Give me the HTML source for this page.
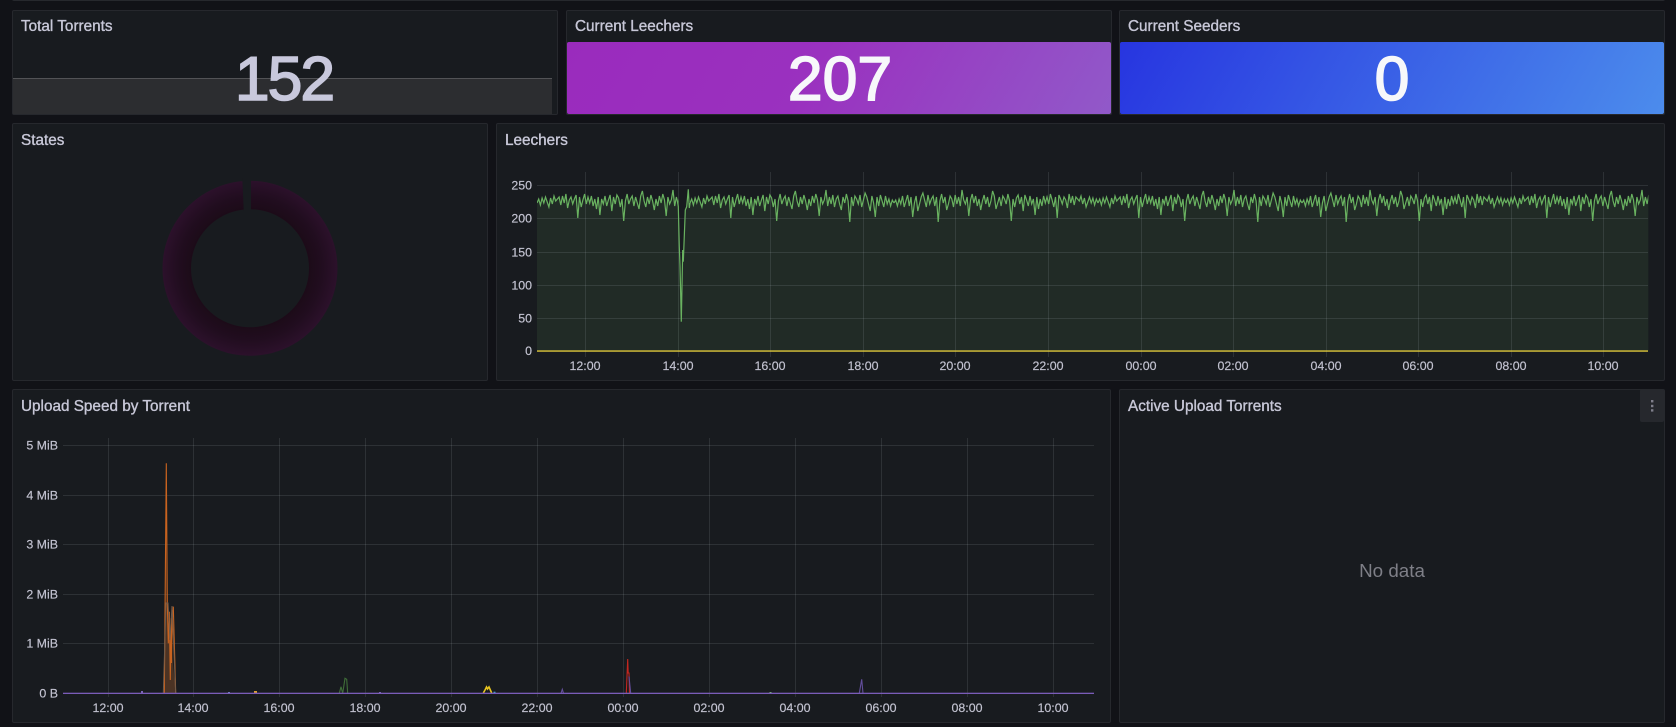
<!DOCTYPE html>
<html lang="en">
<head>
<meta charset="utf-8">
<title>Dashboard</title>
<style>
html,body{margin:0;padding:0;background:#111217;width:1676px;height:727px;overflow:hidden}
.p{position:absolute;background:#181b1f;border:1px solid #26282d;border-radius:2px;box-sizing:border-box}
svg{position:absolute;left:0;top:0}
text{font-family:"Liberation Sans",sans-serif}
.t{font-size:15.3px;fill:#c8c8d8;stroke:#c8c8d8;stroke-width:.35px}
.a{font-size:12.4px;fill:#c4c4d2;stroke:#c4c4d2;stroke-width:.15px}
.big{font-size:62.5px;stroke-width:1.6px;text-anchor:middle}
</style>
</head>
<body>
<div class="p" style="left:12px;top:-20px;width:1653px;height:21px"></div>
<div class="p" style="left:12px;top:10px;width:546px;height:105px"></div>
<div style="position:absolute;left:13px;top:78px;width:539px;height:36px;background:#2c2d30;border-top:1px solid #525356;box-sizing:border-box"></div>
<div class="p" style="left:566px;top:10px;width:546px;height:105px"></div>
<div style="position:absolute;left:567px;top:42px;width:544px;height:72px;border-radius:2px;background:linear-gradient(120deg,#9a2bbd,#9a31bf 45%,#9159c9)"></div>
<div class="p" style="left:1119px;top:10px;width:546px;height:105px"></div>
<div style="position:absolute;left:1120px;top:42px;width:544px;height:72px;border-radius:2px;background:linear-gradient(120deg,#2735e0,#4c8cec)"></div>
<div class="p" style="left:12px;top:123px;width:476px;height:258px"></div>
<div class="p" style="left:496px;top:123px;width:1169px;height:258px"></div>
<div class="p" style="left:12px;top:389px;width:1099px;height:334px"></div>
<div class="p" style="left:1119px;top:389px;width:546px;height:334px"></div>
<div style="position:absolute;left:1640px;top:389px;width:24px;height:33px;background:#26282d;border-radius:2px"></div>

<svg width="1676" height="727" viewBox="0 0 1676 727">
<defs>
<radialGradient id="dn" gradientUnits="userSpaceOnUse" cx="250" cy="268.3" r="87.5">
<stop offset="0.67" stop-color="#1c0b18"/>
<stop offset="0.82" stop-color="#210d1f"/>
<stop offset="1" stop-color="#2c112b"/>
</radialGradient>
<clipPath id="c1"><rect x="537" y="170" width="141.5" height="190"/></clipPath>
<clipPath id="c2"><rect x="690" y="170" width="958.3" height="190"/></clipPath>
<path id="n" fill="none" stroke="#69b260" stroke-width="1.2" vector-effect="non-scaling-stroke" d="M0 203 1 199 2 205 3 198 4 203 5 197 6 202 7 207 8 198 9 204 10 196 11 201 12 199 13 197 14 205 15 196 16 203 17 194 18 208 19 200 20 197 21 204 22 199 23 195 24 218 25 197 26 207 27 200 28 194 29 204 30 197 31 203 32 196 33 206 34 199 35 209 36 197 37 215 38 199 39 204 40 196 41 206 42 200 43 195 44 211 45 197 46 204 47 195 48 198 49 207 50 199 51 221 52 201 53 194 54 204 55 199 56 196 57 206 58 197 59 203 60 209 61 196 62 191 63 201 64 207 65 197 66 204 67 195 68 201 69 210 70 199 71 206 72 196 73 203 74 194 75 200 76 216 77 197 78 204 79 200 80 190 81 206 82 197 83 204 84 195 85 207 86 199 87 196 88 204 89 210 90 197 91 203 92 194 93 201 94 222 95 197 96 206 97 196 98 199 99 204 100 195 101 207 102 200 103 193 104 197 105 204 106 211 107 196 108 203 109 217 110 197 111 206 112 195 113 201 114 207 115 196 116 204 117 199 118 206 119 200 120 203"/>
<path id="f" fill="#73bf69" fill-opacity=".1" d="M0 203 1 199 2 205 3 198 4 203 5 197 6 202 7 207 8 198 9 204 10 196 11 201 12 199 13 197 14 205 15 196 16 203 17 194 18 208 19 200 20 197 21 204 22 199 23 195 24 218 25 197 26 207 27 200 28 194 29 204 30 197 31 203 32 196 33 206 34 199 35 209 36 197 37 215 38 199 39 204 40 196 41 206 42 200 43 195 44 211 45 197 46 204 47 195 48 198 49 207 50 199 51 221 52 201 53 194 54 204 55 199 56 196 57 206 58 197 59 203 60 209 61 196 62 191 63 201 64 207 65 197 66 204 67 195 68 201 69 210 70 199 71 206 72 196 73 203 74 194 75 200 76 216 77 197 78 204 79 200 80 190 81 206 82 197 83 204 84 195 85 207 86 199 87 196 88 204 89 210 90 197 91 203 92 194 93 201 94 222 95 197 96 206 97 196 98 199 99 204 100 195 101 207 102 200 103 193 104 197 105 204 106 211 107 196 108 203 109 217 110 197 111 206 112 195 113 201 114 207 115 196 116 204 117 199 118 206 119 200 120 203V351H0Z"/>
</defs>

<!-- titles -->
<text class="t" x="21" y="31">Total Torrents</text>
<text class="t" x="575" y="31">Current Leechers</text>
<text class="t" x="1128" y="31">Current Seeders</text>
<text class="t" x="21" y="145">States</text>
<text class="t" x="505" y="145">Leechers</text>
<text class="t" x="21" y="411">Upload Speed by Torrent</text>
<text class="t" x="1128" y="411">Active Upload Torrents</text>

<!-- stats -->
<text class="big" x="284" y="100" fill="#c8c8dc" stroke="#c8c8dc" letter-spacing="-2">152</text>
<text class="big" x="840" y="100" fill="#f7f8fa" stroke="#f7f8fa">207</text>
<text class="big" x="1392" y="100" fill="#f7f8fa" stroke="#f7f8fa">0</text>

<!-- donut -->
<path fill="url(#dn)" fill-rule="evenodd" d="M250 180.8a87.5 87.5 0 1 1-.01 0zM250 209.3a59 59 0 1 0 .01 0z"/>
<polygon fill="#181b1f" points="242.3,178 251,178 251,211 243.7,211"/>

<!-- leechers fill & line -->
<g clip-path="url(#c1)">
<use href="#f" transform="translate(537 0) scale(1.7 1)"/>
</g>
<g clip-path="url(#c2)">
<use href="#f" transform="translate(690 0) scale(1.7 1)"/>
<use href="#f" transform="translate(1098 0) scale(-1.7 1)"/>
<use href="#f" transform="translate(1098 0) scale(1.7 1)"/>
<use href="#f" transform="translate(1506 0) scale(-1.7 1)"/>
<use href="#f" transform="translate(1506 0) scale(1.7 1)"/>
</g>
<path fill="#73bf69" fill-opacity=".1" d="M678.3 206.7 679.3 246.7 680 265 681.3 321.7 682.7 250 683.3 261.7 685.3 210 686.7 206.7 688.3 189.3 689.3 208 690 203V351H678.3Z"/>

<!-- leechers grid -->
<g stroke="#f0faff" stroke-opacity=".1" stroke-width="1" fill="none">
<path d="M537 185.5H1648M537 218.5H1648M537 252.5H1648M537 285.5H1648M537 318.5H1648"/>
<path d="M585.5 172V357M678.5 172V357M770.5 172V357M863.5 172V357M955.5 172V357M1048.5 172V357M1141.5 172V357M1233.5 172V357M1326.5 172V357M1418.5 172V357M1511.5 172V357M1603.5 172V357"/>
</g>
<g clip-path="url(#c1)">
<use href="#n" transform="translate(537 0) scale(1.7 1)"/>
</g>
<g clip-path="url(#c2)">
<use href="#n" transform="translate(690 0) scale(1.7 1)"/>
<use href="#n" transform="translate(1098 0) scale(-1.7 1)"/>
<use href="#n" transform="translate(1098 0) scale(1.7 1)"/>
<use href="#n" transform="translate(1506 0) scale(-1.7 1)"/>
<use href="#n" transform="translate(1506 0) scale(1.7 1)"/>
</g>
<polyline fill="none" stroke="#69b260" stroke-width="1.2" points="677.5 201 678.3 206.7 679.3 246.7 680 265 681.3 321.7 682.7 250 683.3 261.7 685.3 210 686.7 206.7 688.3 189.3 689.3 208 690 203"/>
<rect x="537" y="350.4" width="1111" height="1.3" fill="#e9d13c"/>

<g class="a" text-anchor="end">
<text x="532" y="189.6">250</text>
<text x="532" y="222.6">200</text>
<text x="532" y="256.6">150</text>
<text x="532" y="289.6">100</text>
<text x="532" y="322.6">50</text>
<text x="532" y="355.2">0</text>
</g>
<g class="a" text-anchor="middle">
<text x="585" y="370">12:00</text>
<text x="678" y="370">14:00</text>
<text x="770" y="370">16:00</text>
<text x="863" y="370">18:00</text>
<text x="955" y="370">20:00</text>
<text x="1048" y="370">22:00</text>
<text x="1141" y="370">00:00</text>
<text x="1233" y="370">02:00</text>
<text x="1326" y="370">04:00</text>
<text x="1418" y="370">06:00</text>
<text x="1511" y="370">08:00</text>
<text x="1603" y="370">10:00</text>
</g>

<!-- upload grid -->
<g stroke="#f0faff" stroke-opacity=".1" stroke-width="1" fill="none">
<path d="M63 445.5H1094M63 495.5H1094M63 544.5H1094M63 594.5H1094M63 643.5H1094"/>
<path d="M108.5 438V697M193.5 438V697M279.5 438V697M365.5 438V697M451.5 438V697M537.5 438V697M623.5 438V697M709.5 438V697M795.5 438V697M881.5 438V697M967.5 438V697M1053.5 438V697"/>
</g>
<!-- upload series -->
<polygon fill="#3a2c26" fill-opacity=".8" points="163.3,693.3 166,603 168,603 175.7,693.3"/>
<polygon fill="#e0722a" fill-opacity=".15" points="164.3,693.3 166.3,463.3 167.3,603 175.7,693.3"/>
<polyline fill="none" stroke="#c9631f" stroke-width="1.1" points="164.3,693.3 166.3,463.3 167.3,603 168.3,643.3 169.3,611.7 170.3,680 171.3,618.3 171.5,663 172.3,610 173,616.7 173.3,606.7 175.7,693.3"/>
<polyline fill="none" stroke="#6e5a4a" stroke-width="1" points="163.3,693.3 166,603 168,603 170,640 172,606 175.7,693.3"/>
<polyline fill="none" stroke="#3f6e38" stroke-width="1.1" points="339.3,693.3 341,686.7 342.7,693.3 345,678.3 346.7,679.3 347.7,693.3"/>
<polyline fill="none" stroke="#e8c51f" stroke-width="1.6" points="483.3,693 485,690 486.5,687 487.5,689 489,687 491.7,693"/>
<polyline fill="none" stroke="#634e9c" stroke-width="1.1" points="561,693.3 562.3,689.3 563.5,693.3"/>
<polyline fill="none" stroke="#c4261f" stroke-width="1.1" points="626.3,693.3 627.7,659 628.2,673 629,673 629.5,693.3"/>
<polyline fill="none" stroke="#634e9c" stroke-width="1.1" points="629,676.5 630.7,693.3"/>
<polyline fill="none" stroke="#634e9c" stroke-width="1.1" points="859.3,693.3 861.7,679.3 863,693.3"/>
<rect x="141" y="691" width="2" height="2" fill="#7c66b8"/>
<rect x="228" y="692" width="2" height="1.5" fill="#6f85c4"/>
<rect x="254" y="691" width="3" height="2" fill="#e0a030"/>
<rect x="493.5" y="691.7" width="2" height="1.5" fill="#3fa9d8"/>
<rect x="769.5" y="692" width="2" height="1.5" fill="#73bf69"/>
<rect x="379" y="692" width="2" height="1.5" fill="#7c66b8"/>
<rect x="63" y="692.7" width="1031" height="1.3" fill="#7a5cb8"/>

<g class="a" text-anchor="end">
<text x="58" y="449.6">5 MiB</text>
<text x="58" y="499.6">4 MiB</text>
<text x="58" y="548.6">3 MiB</text>
<text x="58" y="598.6">2 MiB</text>
<text x="58" y="647.6">1 MiB</text>
<text x="58" y="697.6">0 B</text>
</g>
<g class="a" text-anchor="middle">
<text x="108" y="712">12:00</text>
<text x="193" y="712">14:00</text>
<text x="279" y="712">16:00</text>
<text x="365" y="712">18:00</text>
<text x="451" y="712">20:00</text>
<text x="537" y="712">22:00</text>
<text x="623" y="712">00:00</text>
<text x="709" y="712">02:00</text>
<text x="795" y="712">04:00</text>
<text x="881" y="712">06:00</text>
<text x="967" y="712">08:00</text>
<text x="1053" y="712">10:00</text>
</g>

<!-- no data + menu -->
<text x="1392" y="577" text-anchor="middle" font-size="18.8" fill="#7e7f87">No data</text>
<rect x="1651" y="400" width="2.4" height="2.4" fill="#7f7f8c"/>
<rect x="1651" y="404.8" width="2.4" height="2.4" fill="#7f7f8c"/>
<rect x="1651" y="409.2" width="2.4" height="2.4" fill="#7f7f8c"/>
</svg>
</body>
</html>
